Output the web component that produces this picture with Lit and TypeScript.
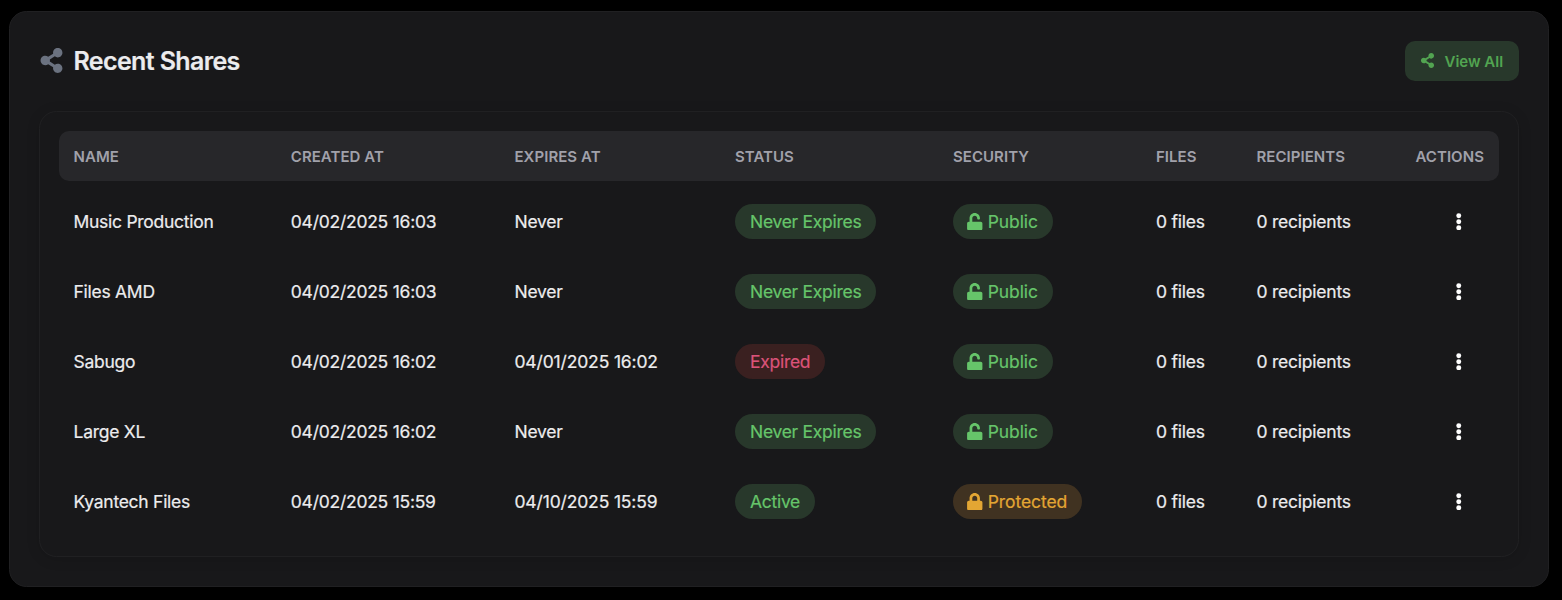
import { LitElement, html, css, svg } from "lit";
import { customElement } from "lit/decorators.js";

const SHARE = svg`<path d="M352 320c-22.608 0-43.387 7.819-59.79 20.895l-102.486-64.054a96.551 96.551 0 0 0 0-41.683l102.486-64.054C308.613 184.181 329.392 192 352 192c53.019 0 96-42.981 96-96S405.019 0 352 0s-96 42.981-96 96c0 7.158.79 14.13 2.276 20.841L155.79 180.895C139.387 167.819 118.608 160 96 160c-53.019 0-96 42.981-96 96s42.981 96 96 96c22.608 0 43.387-7.819 59.79-20.895l102.486 64.054A96.301 96.301 0 0 0 256 416c0 53.019 42.981 96 96 96s96-42.981 96-96-42.981-96-96-96z"/>`;
const UNLOCK = svg`<path d="M400 256H152V152.9c0-39.6 31.7-72.5 71.3-72.9 40-.4 72.7 32.1 72.7 72v16c0 13.3 10.7 24 24 24h32c13.3 0 24-10.7 24-24v-16C376 68 307.5-.3 223.5 0 139.5.3 72 69.5 72 153.5V256H48c-26.5 0-48 21.5-48 48v160c0 26.5 21.5 48 48 48h352c26.5 0 48-21.5 48-48V304c0-26.5-21.5-48-48-48z"/>`;
const LOCK = svg`<path d="M400 224h-24v-72C376 68.2 307.8 0 224 0S72 68.2 72 152v72H48c-26.5 0-48 21.5-48 48v192c0 26.5 21.5 48 48 48h352c26.5 0 48-21.5 48-48V272c0-26.5-21.5-48-48-48zm-104 0H152v-72c0-39.7 32.3-72 72-72s72 32.3 72 72v72z"/>`;

interface Share {
  name: string;
  created: string;
  expires: string;
  status: string;
  secured?: boolean;
}

const SHARES: Share[] = [
  { name: "Music Production", created: "04/02/2025 16:03", expires: "Never", status: "Never Expires" },
  { name: "Files AMD", created: "04/02/2025 16:03", expires: "Never", status: "Never Expires" },
  { name: "Sabugo", created: "04/02/2025 16:02", expires: "04/01/2025 16:02", status: "Expired" },
  { name: "Large XL", created: "04/02/2025 16:02", expires: "Never", status: "Never Expires" },
  { name: "Kyantech Files", created: "04/02/2025 15:59", expires: "04/10/2025 15:59", status: "Active", secured: true },
];

const COLUMNS = ["Name", "Created at", "Expires at", "Status", "Security", "Files", "Recipients", "Actions"];

@customElement("app-root")
export class AppRoot extends LitElement {
  static styles = css`
    :host {
      display: block;
      box-sizing: border-box;
      height: 600px;
      padding: 11px 13px 13px 9px;
      background: #000;
      font-family: Inter, sans-serif;
      color: #ececee;
    }
    * { box-sizing: border-box; }
    svg { display: block; fill: currentColor; flex: none; }
    .card {
      height: 576px;
      padding: 29px;
      border: 1px solid #202022;
      border-radius: 17.5px;
      background: #18181a;
    }
    .head {
      display: flex;
      align-items: center;
      justify-content: space-between;
      height: 40px;
      margin-bottom: 30px;
    }
    .title {
      display: flex;
      align-items: center;
      gap: 9.5px;
      height: 40px;
      margin: 0;
      font-size: 25px;
      line-height: 35px;
      font-weight: 600;
      letter-spacing: -0.63px;
      -webkit-text-stroke: 0.2px;
    }
    .title svg { width: 25px; height: 25px; margin-bottom: 1px; color: #6b7280; }
    .title span { padding-top: 1px; }
    .view {
      display: flex;
      align-items: center;
      gap: 9.5px;
      width: 114px;
      height: 40px;
      padding: 0 0 0 15px;
      border: 0;
      border-radius: 10px;
      background: #28382b;
      color: #52a451;
      font: 600 15px/20px Inter, sans-serif;
      white-space: nowrap;
    }
    .view svg { width: 15px; height: 15px; margin-bottom: 1px; }
    .view span { padding-top: 2px; }
    .table {
      height: 446px;
      padding: 19px;
      border: 1px solid #202022;
      border-radius: 17.5px;
      box-shadow: 0 2px 14px rgba(0, 0, 0, 0.12);
    }
    .line {
      display: grid;
      grid-template-columns: 217.3px 223.7px 220.5px 218px 203px 100.5px 159px 98px;
      align-items: center;
      height: 70px;
      font-size: 17.5px;
      line-height: 25px;
      letter-spacing: -0.23px;
      white-space: nowrap;
    }
    .line > span { padding-left: 14.5px; }
    .row { padding-bottom: 1px; -webkit-text-stroke: 0.2px; }
    .row .name { letter-spacing: -0.27px; }
    .row .date { letter-spacing: -0.25px; }
    .row .expiry { letter-spacing: -0.15px; }
    .labels {
      height: 50px;
      margin-bottom: 6px;
      border-radius: 10px;
      background: #27272a;
      color: #a1a1aa;
      font-size: 15px;
      font-weight: 600;
      letter-spacing: 0.05px;
      text-transform: uppercase;
    }
    .slot { display: flex; }
    .chip {
      display: inline-flex;
      align-items: center;
      height: 35px;
      padding: 0 15px;
      border-radius: 18px;
      background: #28382b;
      color: #66c56a;
      letter-spacing: -0.28px;
    }
    .chip.lock { letter-spacing: -0.08px; }
    .chip svg { width: 17.5px; height: 17.5px; margin: 0 4.4px 0 -2.2px; }
    .chip.expired { background: #3a2020; color: #db5379; }
    .chip.protected { background: #403221; color: #e3a633; }
    .line > .more {
      display: flex;
      justify-content: center;
      width: 50px;
      margin-left: 32.8px;
      padding: 0;
      color: #fff;
    }
    .more svg { width: 17.5px; height: 17.5px; }
  `;

  private icon(shape: unknown) {
    return html`<svg viewBox="-32 0 512 512">${shape}</svg>`;
  }

  private row(s: Share) {
    return html`<div class="line row">
      <span class="name">${s.name}</span>
      <span class="date">${s.created}</span>
      <span class="${s.expires === "Never" ? "date" : "expiry"}">${s.expires}</span>
      <span class="slot"><span class="chip ${s.status === "Expired" ? "expired" : ""}">${s.status}</span></span>
      <span class="slot"><span class="chip lock ${s.secured ? "protected" : ""}">${this.icon(s.secured ? LOCK : UNLOCK)}${s.secured ? "Protected" : "Public"}</span></span>
      <span>0 files</span>
      <span>0 recipients</span>
      <span class="more"><svg viewBox="0 0 512 512"><circle cx="256" cy="80" r="72" /><circle cx="256" cy="256" r="72" /><circle cx="256" cy="432" r="72" /></svg></span>
    </div>`;
  }

  render() {
    return html`<section class="card">
      <header class="head">
        <h2 class="title">${this.icon(SHARE)}<span>Recent Shares</span></h2>
        <button class="view">${this.icon(SHARE)}<span>View All</span></button>
      </header>
      <div class="table">
        <div class="line labels">${COLUMNS.map((c) => html`<span>${c}</span>`)}</div>
        ${SHARES.map((s) => this.row(s))}
      </div>
    </section>`;
  }
}
